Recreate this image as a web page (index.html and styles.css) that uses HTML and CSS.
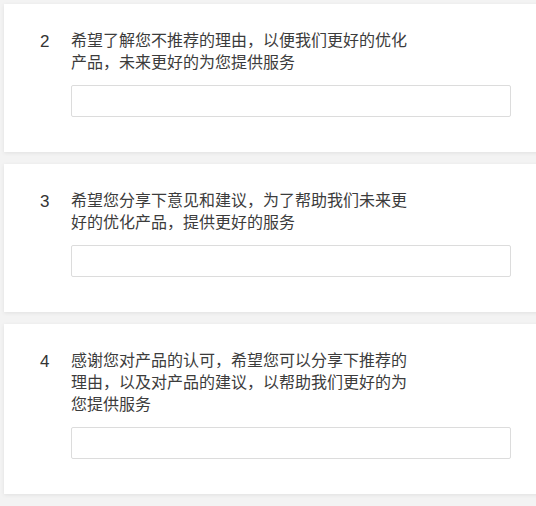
FILE: index.html
```html
<!DOCTYPE html>
<html lang="zh-CN">
<head>
    <meta charset="UTF-8">
    <meta name="viewport" content="width=device-width, initial-scale=1.0">
    <title>问卷</title>
    <link rel="stylesheet" href="styles.css">
</head>
<body>
    <div class="question-list">
        <div class="question-card">
            <div class="question-no">2</div>
            <div class="question-body">
                <div class="question-title">希望了解您不推荐的理由，以便我们更好的优化产品，未来更好的为您提供服务</div>
                <input type="text" class="answer-input">
            </div>
        </div>
        <div class="question-card">
            <div class="question-no">3</div>
            <div class="question-body">
                <div class="question-title">希望您分享下意见和建议，为了帮助我们未来更好的优化产品，提供更好的服务</div>
                <input type="text" class="answer-input">
            </div>
        </div>
        <div class="question-card">
            <div class="question-no">4</div>
            <div class="question-body">
                <div class="question-title">感谢您对产品的认可，希望您可以分享下推荐的理由，以及对产品的建议，以帮助我们更好的为您提供服务</div>
                <input type="text" class="answer-input">
            </div>
        </div>
    </div>
</body>
</html>
```

FILE: styles.css
```css
html, body {
    margin: 0;
    padding: 0;
    overflow: hidden;
}
body {
    font-family: "Liberation Sans", Arial, "Noto Sans CJK SC", sans-serif;
    background-color: #f3f3f3;
    color: #333;
}
.question-list {
    padding-top: 4px;
}
.question-card {
    display: flex;
    background: white;
    margin: 0 -30px 12px 4px;
    padding: 26px 0 35px 36px;
    box-shadow: 0 1px 4px rgba(0,0,0,0.08);
}
.question-no {
    width: 31px;
    font-size: 17px;
    line-height: 23px;
    color: #333;
}
.question-body {
    width: 440px;
}
.question-title {
    width: 336px;
    font-size: 16px;
    line-height: 22px;
    color: #3c3c3c;
    margin-bottom: 11px;
}
.answer-input {
    display: block;
    width: 100%;
    height: 32px;
    margin: 0;
    padding: 0 8px;
    border: 1px solid #dcdcdc;
    border-radius: 2px;
    box-sizing: border-box;
    background: white;
    font-size: 14px;
}
```
